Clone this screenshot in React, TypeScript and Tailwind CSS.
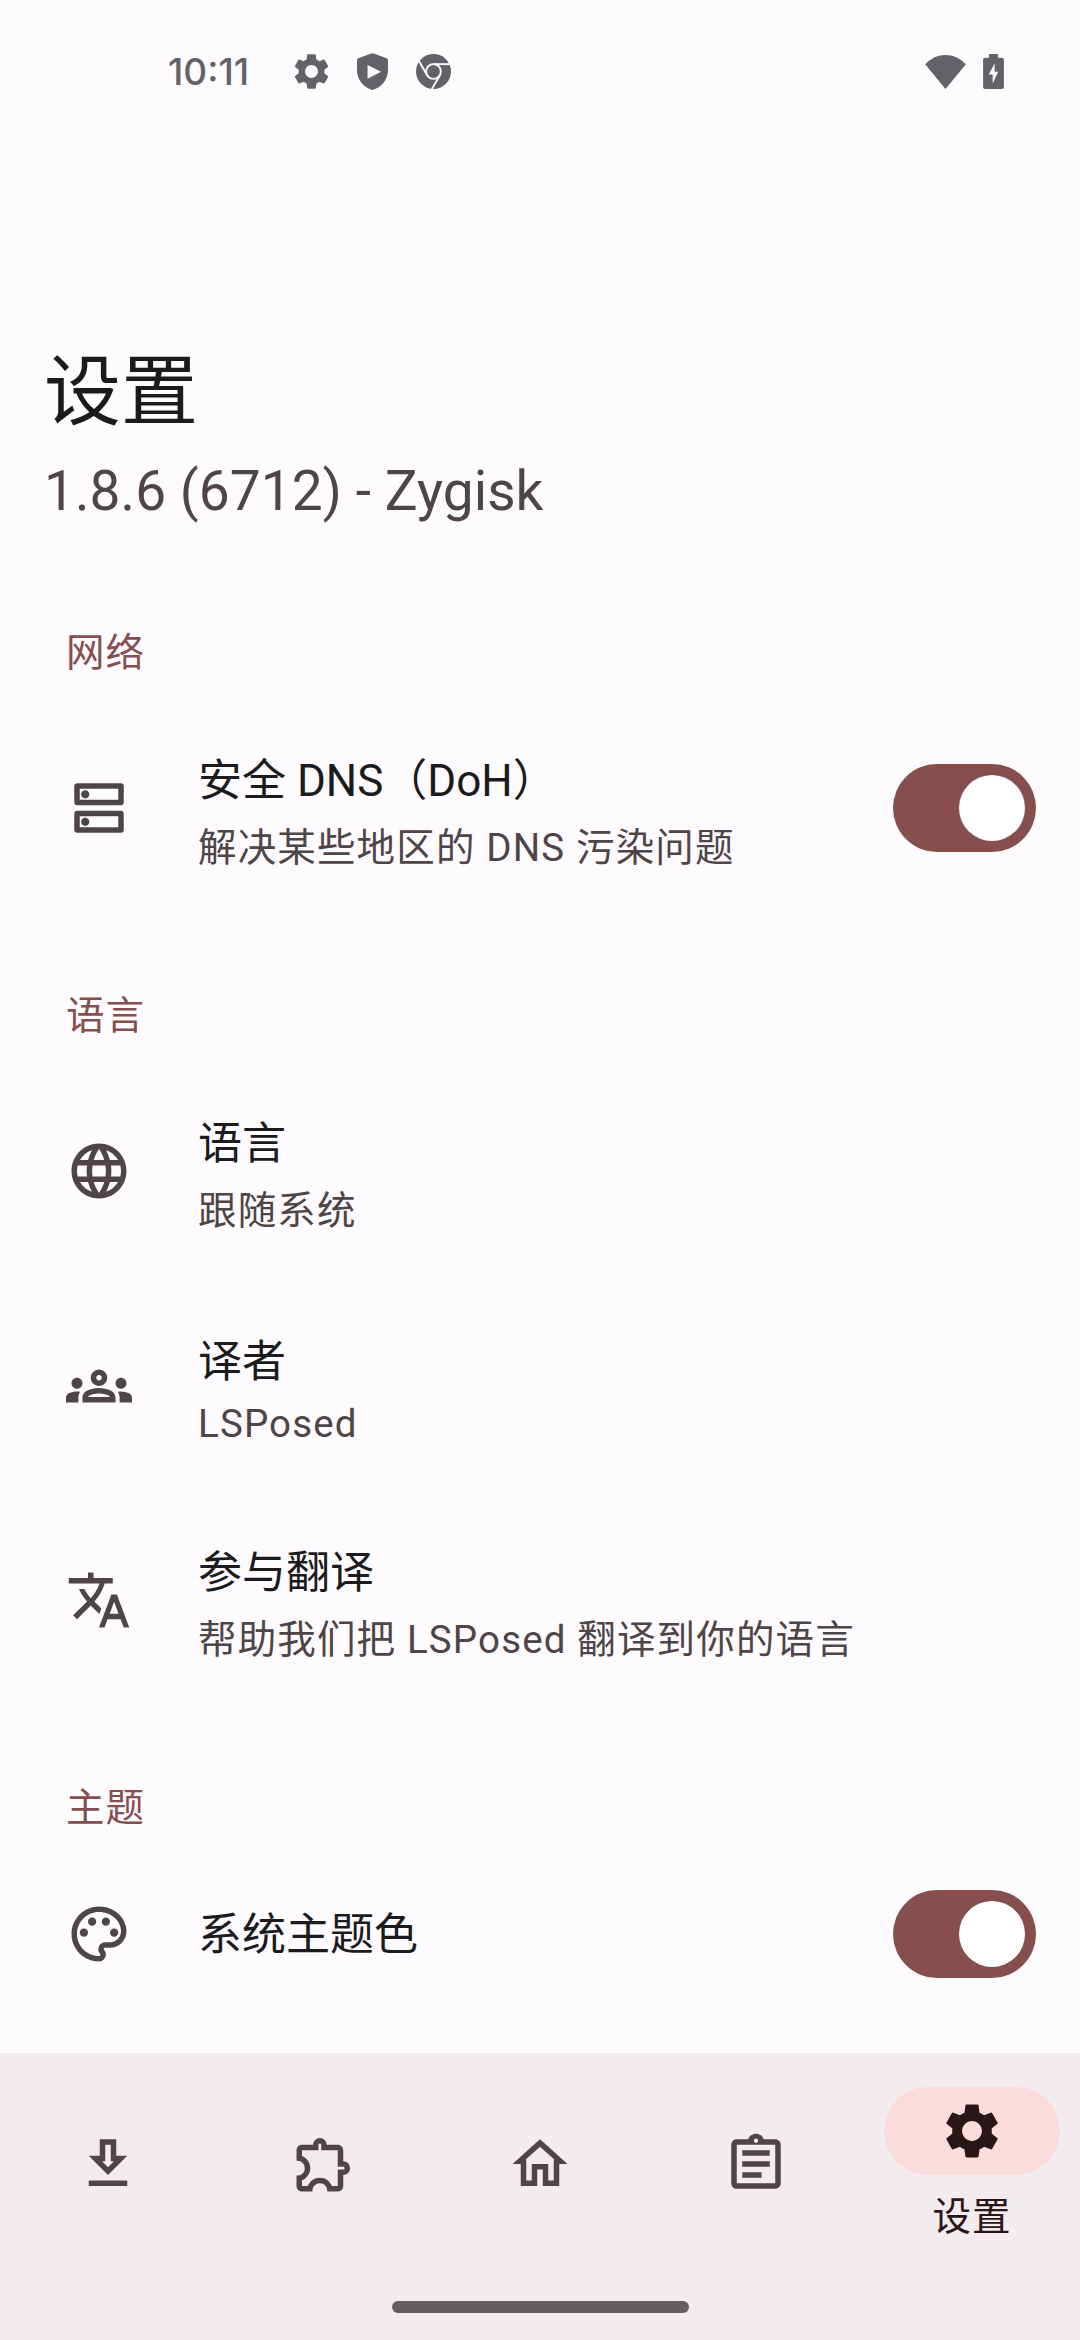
import type { ReactNode } from "react";
import {
  MdOutlineAssignment,
  MdOutlineDns,
  MdOutlineExtension,
  MdOutlineGetApp,
  MdOutlineGroups,
  MdOutlineHome,
  MdOutlinePalette,
  MdLanguage,
  MdSettings,
  MdTranslate,
} from "react-icons/md";

function ShieldPlay() {
  return (
    <svg className="h-[37px] w-[31px]" viewBox="0 0 94 112">
      <path
        fill="currentColor"
        fillRule="evenodd"
        d="M43 1.5q4-1.5 8 0L90 16q4 1.500 4 6v30c0 29-20 52-47 60C20 104 0 81 0 52V22q0-4.500 4-6ZM32 36v42l41-21Z"
      />
    </svg>
  );
}

function Chrome() {
  return (
    <svg className="size-[35px]" viewBox="2 2 20 20">
      <circle cx="12" cy="12" r="10" fill="currentColor" />
      <g fill="none" stroke="#fefbff" strokeWidth="1.1">
        <circle cx="12" cy="12" r="4.2" />
        <path d="M12 7.800h10" />
        <path d="M12 7.800h10" transform="rotate(120 12 12)" />
        <path d="M12 7.800h10" transform="rotate(240 12 12)" />
      </g>
    </svg>
  );
}

function Wifi() {
  return (
    <svg className="h-[34px] w-[41px]" viewBox="0 0 122 102">
      <path fill="currentColor" d="M0 28C35-9.300 87-9.300 122 28L61 102Z" />
    </svg>
  );
}

function Battery() {
  return (
    <svg className="h-[35px] w-[21px]" viewBox="0 0 63 106">
      <path
        fill="currentColor"
        fillRule="evenodd"
        d="M18 0h27v11h12q6 0 6 6v83q0 6-6 6H6q-6 0-6-6V17q0-6 6-6h12ZM35 29 17 62h12v27l17-35H35Z"
      />
    </svg>
  );
}

function Switch() {
  return (
    <div
      role="switch"
      aria-checked="true"
      className="flex h-[88px] w-[143px] shrink-0 items-center justify-end rounded-full bg-[#864f4e] pr-[11px]"
    >
      <div className="size-[66px] rounded-full bg-white" />
    </div>
  );
}

function Category({ children }: { children: ReactNode }) {
  return (
    <h2 className="flex h-[149px] items-end pb-[22px] pl-[66px] text-[38.5px] leading-[52px] tracking-[0.9px] text-[#864f4e]">
      {children}
    </h2>
  );
}

type RowProps = {
  icon: ReactNode;
  title: string;
  summary?: string;
  summaryClass?: string;
  toggle?: boolean;
  height?: string;
};

function Row({
  icon,
  title,
  summary,
  summaryClass = "mt-[6px] leading-[48px]",
  toggle = false,
  height = "h-[214px]",
}: RowProps) {
  return (
    <div className={`flex items-center pr-[44px] pl-[66px] ${height}`}>
      <span className="shrink-0 text-[66px] text-[#4f4446]">{icon}</span>
      <div className="ml-[66px] flex-1 whitespace-nowrap">
        <div className={`text-[44px] leading-[74px] text-[#1b1b1d] ${summary ? "" : "pt-[3px]"}`}>
          {title}
        </div>
        {summary && (
          <div className={`text-[38.5px] tracking-[1.15px] text-[#4f4446] ${summaryClass}`}>
            {summary}
          </div>
        )}
      </div>
      {toggle && <Switch />}
    </div>
  );
}

const tabs = [MdOutlineGetApp, MdOutlineExtension, MdOutlineHome, MdOutlineAssignment];

export default function App() {
  return (
    <div className="flex h-[2340px] w-[1080px] flex-col overflow-hidden bg-[#fefbff] font-[Roboto,'Noto_Sans_CJK_SC',sans-serif]">
      <header className="flex h-[143px] shrink-0 items-center pr-[76px] pl-[168px] text-[#656267]">
        <span className="w-[122px] font-[Inter,sans-serif] text-[37px] leading-none font-medium whitespace-nowrap">
          10:11
        </span>
        <MdSettings className="size-[43px]" />
        <span className="ml-[24px]">
          <ShieldPlay />
        </span>
        <span className="ml-[28px]">
          <Chrome />
        </span>
        <span className="ml-auto">
          <Wifi />
        </span>
        <span className="ml-[17px]">
          <Battery />
        </span>
      </header>

      <div className="h-[409px] shrink-0 pt-[205px] pl-[44px]">
        <h1 className="text-[77px] leading-[90px] text-[#1b1b1d]">设置</h1>
        <p className="mt-[21px] text-[55px] leading-[64px] tracking-[0.08px] text-[#4f4446]">
          1.8.6 (6712) - Zygisk
        </p>
      </div>

      <main className="min-h-0 flex-1 overflow-hidden">
        <Category>网络</Category>
        <Row
          icon={<MdOutlineDns />}
          title="安全 DNS（DoH）"
          summary="解决某些地区的 DNS 污染问题"
          toggle
        />
        <Category>语言</Category>
        <Row icon={<MdLanguage />} title="语言" summary="跟随系统" />
        <Row
          icon={<MdOutlineGroups />}
          title="译者"
          summary="LSPosed"
          summaryClass="mt-[3px] pb-[2px] leading-[43px]"
          height="h-[215px]"
        />
        <Row
          icon={<MdTranslate />}
          title="参与翻译"
          summary="帮助我们把 LSPosed 翻译到你的语言"
        />
        <Category>主题</Category>
        <Row icon={<MdOutlinePalette />} title="系统主题色" toggle height="h-[155px]" />
      </main>

      <footer className="h-[287px] shrink-0 bg-[#f3ecef]">
        <nav className="grid h-[248px] grid-cols-5">
          {tabs.map((Icon, i) => (
            <div key={i} className="flex justify-center pt-[78px] text-[#4f4446]">
              <Icon className="size-[66px]" />
            </div>
          ))}
          <div className="flex flex-col items-center pt-[34px]">
            <div className="flex h-[88px] w-[176px] items-center justify-center rounded-full bg-[#f9dcdb] text-[#2a1517]">
              <MdSettings className="size-[66px]" />
            </div>
            <span className="mt-[18px] text-[38.5px] leading-[48px] tracking-[0.9px] text-[#2a1517]">
              设置
            </span>
          </div>
        </nav>
        <div className="mx-auto h-[12px] w-[297px] rounded-full bg-[#655e61]" />
      </footer>
    </div>
  );
}
